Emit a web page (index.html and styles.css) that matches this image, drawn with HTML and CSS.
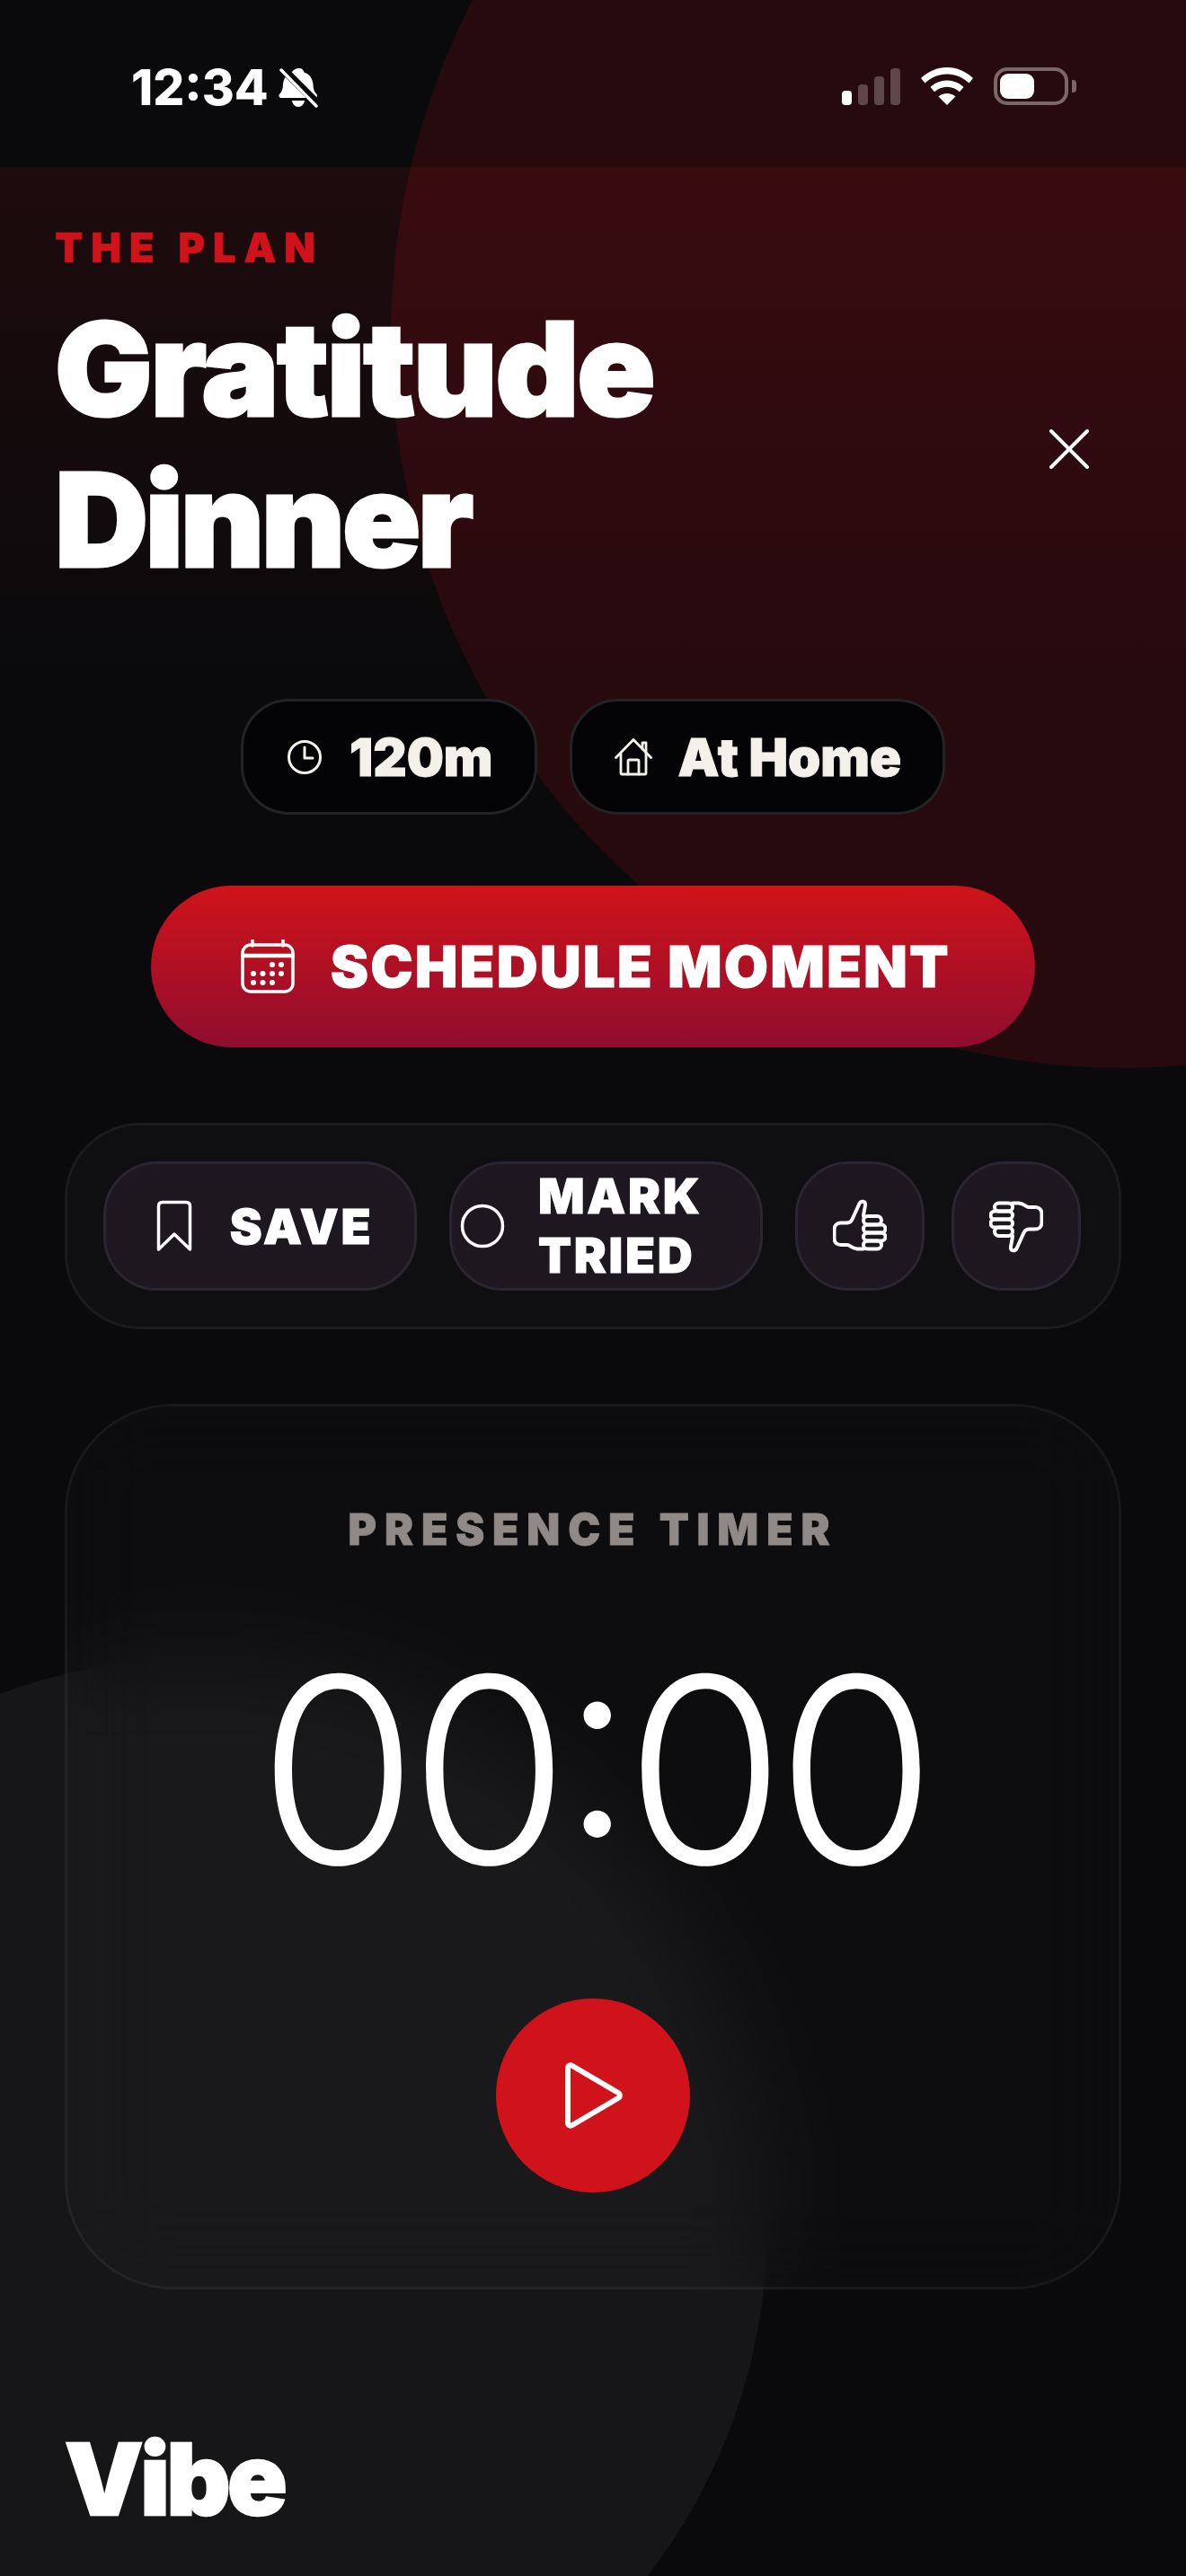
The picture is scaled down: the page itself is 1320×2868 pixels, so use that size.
FILE: index.html
```html
<!DOCTYPE html>
<html lang="en">
<head>
<meta charset="utf-8">
<title>Gratitude Dinner</title>
<link rel="stylesheet" href="styles.css">
</head>
<body>
<div class="page">
  <div class="blob blob-red"></div>
  <div class="blob blob-grey"></div>

  <header class="status">
    <div class="status-left">
      <span class="clock-time">12:34</span>
      <svg class="bell" viewBox="0 0 44 46" width="44" height="46">
        <path fill="#fff" d="M23 1c3 0 5 2 5.500 4.500 6 2 9.500 7 10 13.500.3 5 1 8 4 11 1.200 1.500.5 4-2 4H3c-2.500 0-3.200-2.500-2-4 3-3 3.700-6 4-11 .5-6.500 4-11.500 10-13.500C15.500 3 20 1 23 1zM15 37h14c-.5 4-3.500 7-7 7s-6.500-3-7-7z"/>
        <path stroke="#09090b" stroke-width="9" d="M3 0l41 41"/>
        <path stroke="#fff" stroke-width="3.500" stroke-linecap="round" d="M3 3l39 40"/>
      </svg>
    </div>
    <div class="status-right">
      <div class="signal">
        <span class="bar bar-1"></span><span class="bar bar-2"></span><span class="bar bar-3"></span><span class="bar bar-4"></span>
      </div>
      <svg class="wifi" viewBox="0 0 58 42" width="58" height="42">
        <path fill="#fff" d="M29 0c11 0 21 4.500 29 12l-4.500 5.500C46.500 11 38 7.500 29 7.500S11.500 11 4.500 17.500L0 12C8 4.500 18 0 29 0z"/>
        <path fill="#fff" d="M29 14.500c7 0 13.500 2.800 18.500 7.500L43 27.300c-3.700-3.400-8.800-5.500-14-5.500s-10.300 2.100-14 5.500L10.500 22c5-4.700 11.500-7.500 18.500-7.500z"/>
        <path fill="#fff" d="M29 29c3.700 0 7 1.300 9.500 3.500L29 42l-9.500-9.500C22 30.300 25.300 29 29 29z"/>
      </svg>
      <div class="battery">
        <div class="battery-body"><span class="battery-fill"></span></div>
        <span class="battery-cap"></span>
      </div>
    </div>
  </header>

  <main class="main">
    <section class="hero">
      <div class="hero-text">
        <div class="eyebrow">THE PLAN</div>
        <h1 class="title"><span class="title-line">Gratitude</span> <span class="title-line title-line-tight">Dinner</span></h1>
      </div>
      <svg class="close" viewBox="0 0 44 44" width="44" height="44">
        <path d="M2 2l40 40M42 2L2 42" fill="none" stroke="#fff" stroke-width="4" stroke-linecap="round"/>
      </svg>
    </section>

    <div class="pills">
      <div class="pill">
        <svg class="icon" viewBox="0 0 42 42" width="42" height="42" fill="none" stroke="#f4f1ea" stroke-width="3" stroke-linecap="round" stroke-linejoin="round">
          <circle cx="21" cy="21" r="17.500"/>
          <path d="M21 10v12h9"/>
        </svg>
        <span>120m</span>
      </div>
      <div class="pill">
        <svg class="icon" viewBox="0 0 42 42" width="42" height="42" fill="none" stroke="#f4f1ea" stroke-width="2.800" stroke-linecap="round" stroke-linejoin="round">
          <path d="M1.500 21.500L21 1.500l19.500 20M7 17v21.500c0 1 .5 1.500 1.500 1.500h25c1 0 1.500-.5 1.500-1.500V17"/>
          <path d="M15 40V25.500c0-1 .5-1.500 1.500-1.500h9c1 0 1.500.5 1.500 1.500V40M31 12V5h4v11"/>
        </svg>
        <span>At Home</span>
      </div>
    </div>

    <div class="cta-row">
      <button class="cta">
        <svg class="icon" viewBox="0 0 60 60" width="60" height="60" fill="none" stroke="#fff" stroke-width="3.500" stroke-linecap="round">
          <rect x="2" y="6" width="56" height="52" rx="9"/>
          <path d="M2 18h56" stroke-width="4.500"/>
          <path d="M13 1v6M47 1v6"/>
          <g fill="#fff" stroke="none">
            <circle cx="35" cy="28" r="3"/><circle cx="45" cy="28" r="3"/>
            <circle cx="14" cy="38" r="3"/><circle cx="24.500" cy="38" r="3"/><circle cx="35" cy="38" r="3"/><circle cx="45" cy="38" r="3"/>
            <circle cx="14" cy="48" r="3"/><circle cx="24.500" cy="48" r="3"/><circle cx="35" cy="48" r="3"/>
          </g>
        </svg>
        <span>SCHEDULE MOMENT</span>
      </button>
    </div>

    <div class="actions">
      <button class="action action-wide">
        <svg class="icon" viewBox="0 0 60 60" width="60" height="60" fill="none" stroke="#fff" stroke-width="3.500" stroke-linecap="round" stroke-linejoin="round">
          <path d="M12.500 56V8c0-3 1.500-4.500 4.500-4.500h26c3 0 4.500 1.500 4.500 4.500v48L30 39z"/>
        </svg>
        <span>SAVE</span>
      </button>
      <button class="action action-wide action-start">
        <svg class="icon" viewBox="0 0 60 60" width="60" height="60" fill="none" stroke="#fff" stroke-width="3.500">
          <circle cx="30" cy="30" r="22.500"/>
        </svg>
        <span class="action-label">MARK TRIED</span>
      </button>
      <button class="action action-square">
        <svg class="icon" viewBox="0 0 60 60" width="60" height="60" fill="none" stroke="#fff" stroke-width="4" stroke-linecap="round" stroke-linejoin="round">
          <path d="M16 26.500c4-.5 4.500-2 6-5L29.500 5c1.500-3 6-3 6.500 0 .5 2.500-2 10.500-2 14M16 26.500H9c-5 0-7.500 3.500-7.500 7.500v9.500c0 4.500 2.500 7.500 7.500 7.500h7c3 0 5 4 11 4.500h7"/>
          <rect x="34" y="19" width="20" height="9.500" rx="4.700"/>
          <rect x="34" y="28.500" width="24.500" height="9" rx="4.500"/>
          <rect x="34" y="37.500" width="24.500" height="9" rx="4.500"/>
          <rect x="34" y="46.500" width="20" height="9" rx="4.500"/>
        </svg>
      </button>
      <button class="action action-square">
        <svg class="icon" viewBox="0 0 60 60" width="60" height="60" fill="none" stroke="#fff" stroke-width="4" stroke-linecap="round" stroke-linejoin="round">
          <g transform="rotate(180 30 30)">
            <path d="M16 26.500c4-.5 4.500-2 6-5L29.500 5c1.500-3 6-3 6.500 0 .5 2.500-2 10.500-2 14M16 26.500H9c-5 0-7.500 3.500-7.500 7.500v9.500c0 4.500 2.500 7.500 7.500 7.500h7c3 0 5 4 11 4.500h7"/>
            <rect x="34" y="19" width="20" height="9.500" rx="4.700"/>
            <rect x="34" y="28.500" width="24.500" height="9" rx="4.500"/>
            <rect x="34" y="37.500" width="24.500" height="9" rx="4.500"/>
            <rect x="34" y="46.500" width="20" height="9" rx="4.500"/>
          </g>
        </svg>
      </button>
    </div>

    <section class="timer">
      <div class="timer-label">PRESENCE TIMER</div>
      <div class="timer-value">00:00</div>
      <button class="play">
        <svg class="icon" viewBox="0 0 66 75" width="66" height="75" fill="none" stroke="#fff" stroke-width="6" stroke-linejoin="round">
          <path d="M5 7c0-3 2.500-4.500 5-3l51 30c2.500 1.500 2.500 4.500 0 6L10 70c-2.500 1.500-5 0-5-3z"/>
        </svg>
      </button>
    </section>

    <footer class="brand">Vibe</footer>
  </main>
</div>
</body>
</html>
```

FILE: styles.css
```css
* { box-sizing: border-box; }
html, body { margin: 0; padding: 0; background: #0a0a0c; }
body { font-family: Inter, "Liberation Sans", sans-serif; color: #fff; }
button { font-family: inherit; color: inherit; border: 0; cursor: pointer; }
.icon { flex: none; }

.page {
  position: relative;
  width: 1320px;
  height: 2868px;
  overflow: hidden;
  background: #0a0a0c;
}
.blob { position: absolute; border-radius: 50%; }
.blob-red {
  left: 435px; top: -441px;
  width: 1630px; height: 1630px;
  background: #270a0e;
}
.blob-grey {
  left: -412px; top: 1846px;
  width: 1266px; height: 1266px;
  background: #161618;
}

.status {
  position: relative;
  height: 186px;
  display: flex;
  justify-content: space-between;
  align-items: flex-start;
  padding: 75px 122px 0 146px;
}
.status-left { display: flex; align-items: flex-start; gap: 11px; }
.clock-time { font-size: 55px; font-weight: 800; line-height: 45px; }
.status-right { display: flex; align-items: flex-start; gap: 23px; }
.signal { display: flex; align-items: flex-end; gap: 7px; height: 42px; }
.bar { width: 11px; border-radius: 4px; background: rgba(255,255,255,.25); }
.bar-1 { height: 16px; background: #fff; }
.bar-2 { height: 23px; }
.bar-3 { height: 32px; }
.bar-4 { height: 41px; }
.battery { display: flex; align-items: center; gap: 4px; height: 42px; }
.battery-body {
  width: 83px; height: 42px;
  border: 4px solid rgba(255,255,255,.38);
  border-radius: 15px;
  padding: 3px;
}
.battery-fill { display: block; width: 38px; height: 100%; background: #fff; border-radius: 9px; }
.battery-cap { width: 5px; height: 14px; background: rgba(255,255,255,.38); border-radius: 0 4px 4px 0; }

.main {
  position: relative;
  height: 2682px;
  background: linear-gradient(180deg, rgba(208,19,26,.1), rgba(208,19,26,.015) 480px, transparent 560px);
}

.hero {
  display: flex;
  justify-content: space-between;
  align-items: center;
  padding: 62px 108px 0 61px;
}
.hero-text { padding-bottom: 49px; }
.eyebrow {
  font-size: 45px;
  font-weight: 900;
  letter-spacing: .2em;
  color: #d0131a;
  line-height: 56px;
  -webkit-text-stroke: .6px #d0131a;
}
.title {
  margin: 23px 0 0;
  font-size: 144px;
  font-weight: 900;
  line-height: 168px;
  -webkit-text-stroke: 3px #fff;
}
.title-line { display: block; letter-spacing: -.014em; }
.title-line-tight { letter-spacing: -.024em; }
.close { flex: none; margin-top: 39px; }

.pills {
  display: flex;
  justify-content: center;
  gap: 36px;
  margin-top: 66px;
}
.pill {
  display: flex;
  align-items: center;
  gap: 29px;
  height: 129px;
  padding: 0 46px 0 47px;
  border: 3px solid #232325;
  border-radius: 54px;
  background: #040406;
  color: #f4f1ea;
  font-size: 58px;
  font-weight: 900;
  -webkit-text-stroke: 1px #f4f1ea;
}

.cta-row { display: flex; justify-content: center; margin-top: 79px; }
.cta {
  display: flex;
  align-items: center;
  gap: 40px;
  height: 180px;
  padding: 0 94px 0 100px;
  border-radius: 90px;
  background: linear-gradient(180deg, #d0131a, #8f0d2e);
  font-size: 63px;
  font-weight: 900;
  letter-spacing: .04em;
  -webkit-text-stroke: 1.200px #fff;
}

.actions {
  display: flex;
  align-items: stretch;
  margin: 84px 72px 0;
  padding: 40px;
  border: 3px solid #1b1b1e;
  border-radius: 84px;
  background: #0f0f11;
}
.action {
  display: flex;
  align-items: center;
  justify-content: center;
  gap: 32px;
  height: 144px;
  padding: 0;
  border: 3px solid #2a2530;
  border-radius: 60px;
  background: #1d1720;
  font-size: 54px;
  font-weight: 900;
  letter-spacing: .05em;
  -webkit-text-stroke: 1px #fff;
}
.action-wide { width: 349px; margin-right: 36px; text-align: left; }
.action-start { justify-content: flex-start; padding-left: 4px; }
.action-label { line-height: 66px; }
.action-square { width: 144px; }
.action-square + .action-square { margin-left: 30px; }

.timer {
  display: flex;
  flex-direction: column;
  align-items: center;
  height: 986px;
  margin: 83px 72px 0;
  padding-top: 108px;
  border: 3px solid rgba(255,255,255,.05);
  border-radius: 120px;
  background: rgba(255,255,255,.015);
  backdrop-filter: blur(50px);
}
.timer-label {
  font-size: 48px;
  font-weight: 900;
  letter-spacing: .185em;
  line-height: 58px;
  color: #8f8a88;
  -webkit-text-stroke: .8px #8f8a88;
}
.timer-value {
  margin-top: 78px;
  font-size: 288px;
  font-weight: 300;
  line-height: 320px;
  letter-spacing: -.033em;
  font-feature-settings: "case" 1;
}
.play {
  display: flex;
  align-items: center;
  justify-content: center;
  width: 216px;
  height: 216px;
  margin-top: 95px;
  padding: 0;
  border-radius: 50%;
  background: #d0131a;
}
.brand {
  margin-top: 146px;
  padding-left: 72px;
  font-size: 110px;
  font-weight: 900;
  line-height: 130px;
  letter-spacing: -.03em;
  -webkit-text-stroke: 2.400px #fff;
}
```
